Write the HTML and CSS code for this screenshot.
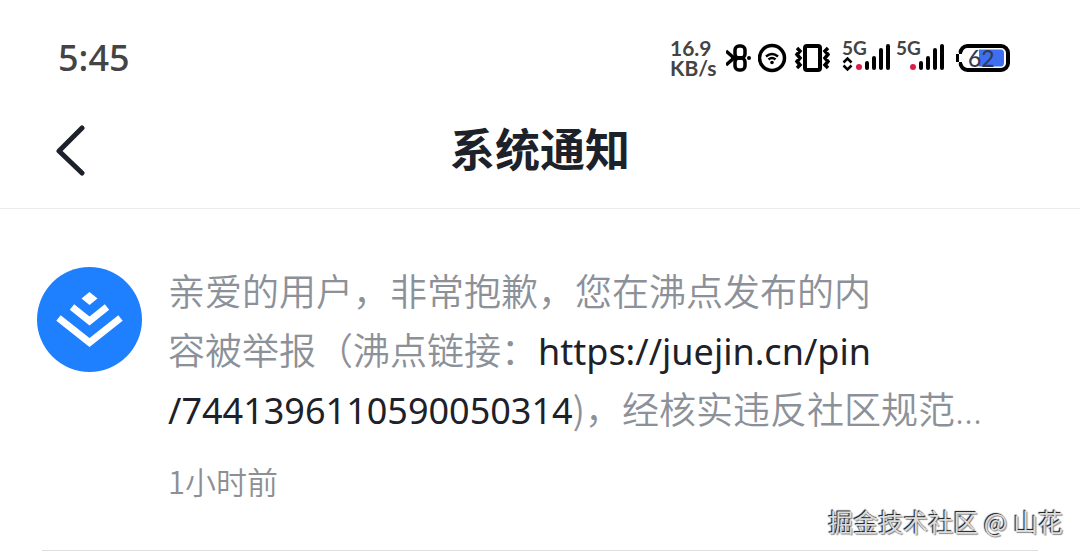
FILE: index.html
```html
<!DOCTYPE html>
<html lang="zh-CN">
<head>
<meta charset="utf-8">
<meta name="viewport" content="width=device-width, initial-scale=1">
<title>系统通知</title>
<link rel="stylesheet" href="styles.css">
</head>
<body>
<div class="status-bar">
  <time class="clock">5:45</time>
  <div class="indicators">
    <div class="speed">16.9<br>KB/s</div>
    <svg class="bluetooth" width="26" height="30" viewBox="0 0 26 30" fill="none" stroke="#000" aria-hidden="true">
      <path d="M0 8l8 7-8 7" stroke-width="3.5"/>
      <rect x="9" y="3" width="10" height="12" rx="4" stroke-width="3.5"/>
      <rect x="9" y="15" width="10" height="12" rx="4" stroke-width="3.5"/>
      <path d="M5 15h10" stroke-width="4"/>
      <circle cx="23" cy="15" r="2" fill="#000" stroke="none"/>
    </svg>
    <svg class="hotspot" width="30" height="30" viewBox="0 0 30 30" fill="none" stroke="#000" aria-hidden="true">
      <circle cx="14" cy="15" r="12.5" stroke-width="3.5"/>
      <path d="M8 13.5q6-5 12 0M10.5 16.5q3.5-3 7 0" stroke-width="2.5"/>
      <circle cx="14" cy="19.500" r="1.8" fill="#000" stroke="none"/>
    </svg>
    <svg class="vibrate" width="36" height="30" viewBox="0 0 36 30" fill="none" stroke="#000" aria-hidden="true">
      <rect x="11" y="3" width="15" height="24" rx="2" stroke-width="4"/>
      <path d="M3 5l3 3-3 3.500 3 3.500-3 3.500 3 3.500-3 3M34 5l-3 3 3 3.500-3 3.500 3 3.500-3 3.500 3 3" stroke-width="3.5"/>
    </svg>
    <div class="network first">
      <span class="generation">5G</span>
      <svg width="48" height="30" viewBox="0 0 48 30" aria-hidden="true">
        <path d="M1.500 19.500l4-4 4 4M1.500 22.500l4 4 4-4" fill="none" stroke="#000" stroke-width="2.5"/>
        <circle cx="17" cy="24" r="3" fill="#dc1e46"/>
        <path d="M25 20v5M32 15v10M39 7v18M46 3v22" stroke="#000" stroke-width="4" stroke-linecap="round"/>
      </svg>
    </div>
    <div class="network">
      <span class="generation">5G</span>
      <svg width="48" height="30" viewBox="0 0 48 30" aria-hidden="true">
        <circle cx="17" cy="24" r="3" fill="#dc1e46"/>
        <path d="M25 20v5M32 15v10M39 7v18M46 3v22" stroke="#000" stroke-width="4" stroke-linecap="round"/>
      </svg>
    </div>
    <div class="battery">
      <svg width="54" height="28" viewBox="0 0 54 28" aria-hidden="true">
        <rect x="4.500" y="2" width="47.500" height="24" rx="7" fill="#fff" stroke="#000" stroke-width="4"/>
        <path d="M23 5.500h22q3 0 3 4v9q0 4-3 4H23z" fill="#3d6ff0"/>
        <path d="M4.500 8.500v11" stroke="#fff" stroke-width="6"/>
        <path d="M1.500 10v8M4.500 7v3M4.500 18v3" stroke="#000" stroke-width="3"/>
      </svg>
      <span class="level">62</span>
    </div>
  </div>
</div>

<header class="nav-bar">
  <button class="back" type="button" aria-label="返回">
    <svg width="32" height="52" viewBox="0 0 32 52" fill="none" stroke="#1d2129" stroke-width="5" stroke-linecap="round" stroke-linejoin="round" aria-hidden="true">
      <path d="M28 4L5 27l23 22"/>
    </svg>
  </button>
  <h1 class="title">系统通知</h1>
</header>

<main>
  <article class="notice">
    <svg class="avatar" width="106" height="106" viewBox="0 0 106 106" aria-hidden="true">
      <circle cx="53.500" cy="53.500" r="52.500" fill="#1e80ff"/>
      <path d="M53.500 26l8 6.500-8 6.500-8-6.500z" fill="#fff"/>
      <path d="M36 41l17.500 14L71 41M22.500 52l31 24.500 31-24.500" fill="none" stroke="#fff" stroke-width="7"/>
    </svg>
    <div class="content">
      <p class="message">亲爱的用户，非常抱歉，您在沸点发布的内<br>容被举报（沸点链接：<a class="link" href="https://juejin.cn/pin/7441396110590050314">https://juejin.cn/pin<br>/7441396110590050314</a>)，经核实违反社区规范<span class="more">...</span></p>
      <time class="sent">1小时前</time>
    </div>
  </article>
</main>
<div class="watermark">掘金技术社区 @ 山花</div>
</body>
</html>
```
FILE: styles.css
```css
* {
  box-sizing: border-box;
}

body {
  margin: 0;
  position: relative;
  background: #fff;
  color: #1d2129;
  font-family: "Noto Sans", "Noto Sans CJK SC", sans-serif;
}

.status-bar {
  display: flex;
  justify-content: space-between;
  align-items: center;
  height: 92px;
  padding: 24px 70px 0 58px;
}

.clock {
  font-size: 36px;
  font-weight: 500;
  line-height: 44px;
  color: #444;
}

.indicators {
  display: flex;
  align-items: center;
  gap: 6px;
}

.speed {
  width: 50px;
  font-family: Lato, sans-serif;
  font-size: 21px;
  font-weight: 700;
  line-height: 20px;
  color: #444;
}

.network {
  position: relative;
  display: flex;
}

.first {
  margin-left: 6px;
}

.generation {
  position: absolute;
  top: -5px;
  left: 0;
  font-family: Lato, sans-serif;
  font-size: 19px;
  font-weight: 700;
  line-height: 20px;
  color: #444;
}

.battery {
  position: relative;
  display: flex;
  margin-left: 6px;
}

.level {
  position: absolute;
  top: 0;
  left: 12px;
  font-family: Lato, sans-serif;
  font-size: 23px;
  font-weight: 500;
  line-height: 28px;
  color: #333b50;
}

.nav-bar {
  display: grid;
  grid-template-columns: 1fr auto 1fr;
  align-items: center;
  height: 117px;
  padding: 0 54px;
  border-bottom: 1px solid #ececee;
}

.back {
  display: flex;
  justify-self: start;
  padding: 0;
  border: 0;
  background: none;
}

.title {
  margin: 0 0 4px;
  font-family: "Noto Sans CJK SC", sans-serif;
  font-size: 45px;
  font-weight: 700;
  line-height: 60px;
}

.notice {
  display: flex;
  gap: 26px;
  margin: 0 42px;
  padding: 52px 0 46px;
  border-bottom: 1px solid #dedfe1;
}

.avatar {
  flex: none;
  margin: 5px 0 0 -6px;
}

.content {
  flex: 1;
}

.message {
  margin: 0;
  font-family: "Noto Sans CJK SC", sans-serif;
  font-size: 37px;
  font-weight: 350;
  line-height: 59px;
  color: #8c9199;
}

.link {
  font-family: "Noto Sans", sans-serif;
  font-size: 36px;
  font-weight: 400;
  line-height: 50px;
  color: #1d2129;
  text-decoration: none;
}

.more {
  font-family: "Noto Sans", sans-serif;
}

.sent {
  display: block;
  margin-top: 19px;
  font-family: "Noto Sans CJK SC", sans-serif;
  font-size: 31px;
  font-weight: 350;
  line-height: 46px;
  color: #8d8f94;
}

.watermark {
  position: absolute;
  right: 17px;
  bottom: 12px;
  font-family: "Noto Sans CJK SC", sans-serif;
  font-size: 25px;
  line-height: 36px;
  color: #dcdcdc;
  text-shadow: -1px -1px 1px #111, 1px 1px 1px #888;
}
```
